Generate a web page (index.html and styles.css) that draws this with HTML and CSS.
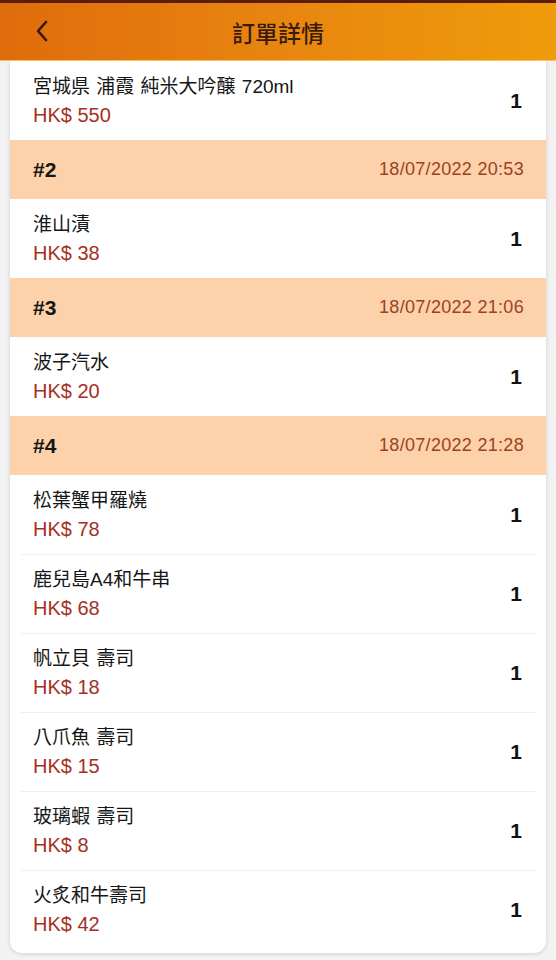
FILE: index.html
```html
<!DOCTYPE html>
<html lang="zh-Hant">
<head>
    <meta charset="UTF-8">
    <meta name="viewport" content="width=device-width, initial-scale=1.0">
    <title>訂單詳情</title>
    <link rel="stylesheet" href="styles.css">
</head>
<body>
    <header class="topbar">
        <button class="back" aria-label="返回">
            <svg width="14" height="22" viewBox="0 0 14 22">
                <path d="M11 2 L3 11 L11 20" fill="none" stroke="#3a1408" stroke-width="2.6" stroke-linecap="round" stroke-linejoin="round"/>
            </svg>
        </button>
        <h1 class="title">訂單詳情</h1>
    </header>

    <main class="card">
        <div class="item">
            <div class="info">
                <div class="name">宮城県 浦霞 純米大吟醸 720ml</div>
                <div class="price">HK$ 550</div>
            </div>
            <div class="qty">1</div>
        </div>

        <div class="order-head">
            <span class="order-no">#2</span>
            <span class="order-time">18/07/2022 20:53</span>
        </div>
        <div class="item">
            <div class="info">
                <div class="name">淮山漬</div>
                <div class="price">HK$ 38</div>
            </div>
            <div class="qty">1</div>
        </div>

        <div class="order-head">
            <span class="order-no">#3</span>
            <span class="order-time">18/07/2022 21:06</span>
        </div>
        <div class="item">
            <div class="info">
                <div class="name">波子汽水</div>
                <div class="price">HK$ 20</div>
            </div>
            <div class="qty">1</div>
        </div>

        <div class="order-head">
            <span class="order-no">#4</span>
            <span class="order-time">18/07/2022 21:28</span>
        </div>
        <div class="item">
            <div class="info">
                <div class="name">松葉蟹甲羅燒</div>
                <div class="price">HK$ 78</div>
            </div>
            <div class="qty">1</div>
        </div>
        <div class="item">
            <div class="info">
                <div class="name">鹿兒島A4和牛串</div>
                <div class="price">HK$ 68</div>
            </div>
            <div class="qty">1</div>
        </div>
        <div class="item">
            <div class="info">
                <div class="name">帆立貝 壽司</div>
                <div class="price">HK$ 18</div>
            </div>
            <div class="qty">1</div>
        </div>
        <div class="item">
            <div class="info">
                <div class="name">八爪魚 壽司</div>
                <div class="price">HK$ 15</div>
            </div>
            <div class="qty">1</div>
        </div>
        <div class="item">
            <div class="info">
                <div class="name">玻璃蝦 壽司</div>
                <div class="price">HK$ 8</div>
            </div>
            <div class="qty">1</div>
        </div>
        <div class="item">
            <div class="info">
                <div class="name">火炙和牛壽司</div>
                <div class="price">HK$ 42</div>
            </div>
            <div class="qty">1</div>
        </div>
    </main>
</body>
</html>
```

FILE: styles.css
```css
body {
    margin: 0;
    background-color: #f2f2f2;
    font-family: "Liberation Sans", "Noto Sans CJK TC", sans-serif;
    color: #161616;
}

.topbar {
    position: relative;
    height: 57px;
    border-top: 3px solid #5a1d10;
    border-bottom: 1px solid #f6c45a;
    background: linear-gradient(90deg, #df6c0b 0%, #e88510 50%, #ef9c0a 100%);
    display: flex;
    align-items: center;
    justify-content: center;
}

.back {
    position: absolute;
    left: 35px;
    top: 17px;
    padding: 0;
    border: none;
    background: none;
    cursor: pointer;
}

.title {
    margin: 0;
    font-size: 23px;
    font-weight: 500;
    color: #3a1a0c;
}

.card {
    margin: 0 10px 5px;
    padding-bottom: 4px;
    background: white;
    border-radius: 0 0 12px 12px;
    box-shadow: 0 1px 4px rgba(0, 0, 0, 0.14);
    overflow: hidden;
}

.item {
    height: 79px;
    margin: 0 11px;
    padding: 0 13px 0 12px;
    display: flex;
    align-items: center;
    justify-content: space-between;
    box-sizing: border-box;
}

.item + .item {
    border-top: 1px solid #efefef;
}

.name {
    font-size: 19px;
    line-height: 28px;
    word-spacing: 1px;
    color: #161616;
}

.price {
    font-size: 20px;
    line-height: 28px;
    color: #a5301e;
}

.qty {
    font-size: 21px;
    font-weight: bold;
    color: #111;
}

.order-head {
    height: 59px;
    padding: 0 22px 0 23px;
    background: #fdd1a9;
    display: flex;
    align-items: center;
    justify-content: space-between;
}

.order-no {
    font-size: 21px;
    font-weight: bold;
    color: #161616;
}

.order-time {
    font-size: 18px;
    letter-spacing: 0.3px;
    color: #9c4124;
}
```
